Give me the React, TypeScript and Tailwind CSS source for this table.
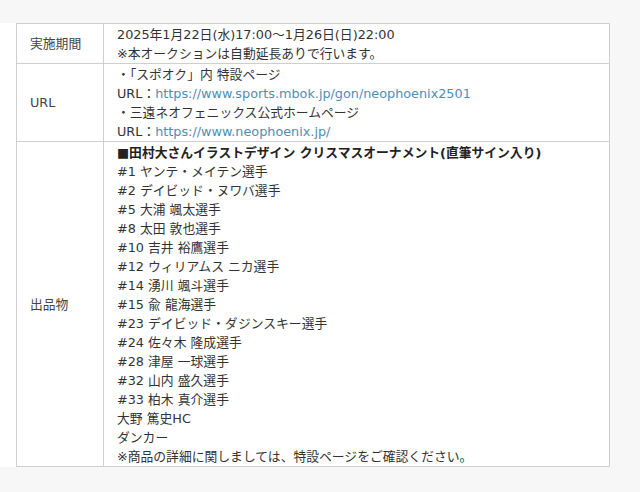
const font = { fontFamily: '"DejaVu Sans", "Noto Sans CJK JP", sans-serif' };

const items = [
  '#1 ヤンテ・メイテン選手',
  '#2 デイビッド・ヌワバ選手',
  '#5 大浦 颯太選手',
  '#8 太田 敦也選手',
  '#10 吉井 裕鷹選手',
  '#12 ウィリアムス ニカ選手',
  '#14 湧川 颯斗選手',
  '#15 兪 龍海選手',
  '#23 デイビッド・ダジンスキー選手',
  '#24 佐々木 隆成選手',
  '#28 津屋 一球選手',
  '#32 山内 盛久選手',
  '#33 柏木 真介選手',
  '大野 篤史HC',
  'ダンカー',
];

function Label({ children }: { children: React.ReactNode }) {
  return (
    <td className="w-[87px] border border-[#cfcfcf] px-[13px] align-middle text-[#444]">
      {children}
    </td>
  );
}

function Link({ href }: { href: string }) {
  return <span className="text-[#4f8db5]">{href}</span>;
}

export default function App() {
  return (
    <div className="h-[492px] bg-[#f7f7f7] pt-[23px]" style={font}>
      <div className="w-[610px] bg-white pl-4">
        <table className="w-full border-collapse text-[12.8px] leading-[19px] text-[#333]">
          <tbody>
            <tr>
              <Label>実施期間</Label>
              <td className="border border-[#cfcfcf] px-[13px] pt-px pb-0">
                2025年1月22日(水)17:00〜1月26日(日)22:00
                <br />
                ※本オークションは自動延長ありで行います。
              </td>
            </tr>
            <tr>
              <Label>URL</Label>
              <td className="border border-[#cfcfcf] px-[13px] pt-px pb-0">
                ・「スポオク」内 特設ページ
                <br />
                URL：<Link href="https://www.sports.mbok.jp/gon/neophoenix2501" />
                <br />
                ・三遠ネオフェニックス公式ホームページ
                <br />
                URL：<Link href="https://www.neophoenix.jp/" />
              </td>
            </tr>
            <tr>
              <Label>出品物</Label>
              <td className="border border-[#cfcfcf] px-[13px] pt-px pb-0">
                <div className="font-bold text-[#222]">
                  ■田村大さんイラストデザイン クリスマスオーナメント(直筆サイン入り)
                </div>
                {items.map((t) => (
                  <div key={t}>{t}</div>
                ))}
                <div>※商品の詳細に関しましては、特設ページをご確認ください。</div>
              </td>
            </tr>
          </tbody>
        </table>
      </div>
    </div>
  );
}
